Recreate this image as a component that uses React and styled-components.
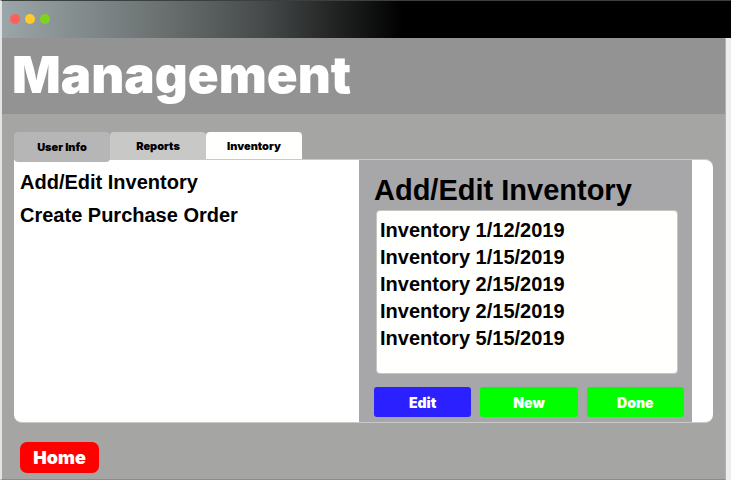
import React, { useState } from "react";
import styled, { createGlobalStyle } from "styled-components";

const GlobalStyle = createGlobalStyle`
  *, *::before, *::after { box-sizing: border-box; }
  body { margin: 0; background: #ededed; }
  button { border: 0; padding: 0; margin: 0; font: inherit; color: inherit; cursor: pointer; }
  h1, h2, ul { margin: 0; padding: 0; }
`;

const Page = styled.div`
  display: flex;
  flex-direction: column;
  min-height: 100vh;
  font-family: Inter, "Liberation Sans", sans-serif;
  color: #000;
`;

const TitleBar = styled.div`
  display: flex;
  align-items: center;
  gap: 5px;
  height: 38px;
  padding: 0 0 1px 8px;
  border-top: 1px solid #3c3f3f;
  border-left: 2px solid #e4e4e4;
  background: linear-gradient(90deg, #9ba6a8 0, #6a7070 22%, #454949 36%, #000 55%);
`;

const Dot = styled.span`
  width: 10px;
  height: 10px;
  border-radius: 50%;
  background: ${(p) => p.$color};
`;

const AppWindow = styled.div`
  flex: 1;
  display: flex;
  flex-direction: column;
  margin-right: 5px;
  border-left: 2px solid #e4e4e4;
  border-right: 1px solid #b2b2b2;
  border-bottom: 1px solid #8c8c8a;
  background: #a5a5a3;
`;

const Header = styled.header`
  height: 76px;
  padding: 7px 10px 0;
  background: #939393;
`;

const Title = styled.h1`
  color: #fff;
  font-size: 51px;
  font-weight: 900;
  line-height: 60px;
`;

const Main = styled.main`
  padding: 18px 12px 0;
`;

const TabList = styled.div`
  display: flex;
`;

const Tab = styled.button`
  position: relative;
  width: 96px;
  height: ${(p) => (p.$raised ? 30 : 27)}px;
  margin-bottom: ${(p) => (p.$raised ? -3 : 0)}px;
  border-radius: ${(p) => (p.$raised ? "4px" : "4px 4px 0 0")};
  background: ${(p) => p.$color};
  font-size: 11px;
  font-weight: 900;
`;

const Content = styled.section`
  display: grid;
  grid-template-columns: 345fr 333fr;
  min-height: 264px;
  padding-right: 21px;
  border: solid #c9c9c9;
  border-width: 1px 0;
  border-radius: 0 8px 8px 8px;
  background: #fff;
`;

const Menu = styled.nav`
  display: flex;
  flex-direction: column;
  align-items: flex-start;
  padding: 6px;
`;

const MenuItem = styled.button`
  height: 33px;
  background: none;
  font-family: "Liberation Sans", Arial, sans-serif;
  font-size: 20px;
  font-weight: 700;
  line-height: 33px;
`;

const Editor = styled.div`
  display: flex;
  flex-direction: column;
  padding: 10px 8px 5px 15px;
  background: #a7a7aa;
`;

const EditorTitle = styled.h2`
  font-family: "Liberation Sans", Arial, sans-serif;
  font-size: 29px;
  font-weight: 700;
  line-height: 40px;
`;

const InventoryList = styled.ul`
  height: 164px;
  margin: 0 6px 0 2px;
  padding: 6px 3px;
  border: 1px solid #c4c4c4;
  border-radius: 4px;
  background: #fffffd;
  list-style: none;
  font-family: "Liberation Sans", Arial, sans-serif;
  font-size: 20px;
  font-weight: 700;
  line-height: 27px;
`;

const Actions = styled.div`
  display: grid;
  grid-template-columns: repeat(3, 1fr);
  gap: 9px;
  margin-top: 13px;
`;

const Action = styled.button`
  height: 30px;
  border-radius: 3px;
  background: ${(p) => p.$color};
  color: #fff;
  font-size: 14px;
  font-weight: 900;
`;

const Footer = styled.footer`
  padding: 19px 18px 6px;
`;

const HomeButton = styled.button`
  width: 79px;
  height: 31px;
  border-radius: 7px;
  background: #f00;
  color: #fff;
  font-size: 18px;
  font-weight: 900;
`;

const tabs = [
  { name: "User Info", color: "#b6b6b6" },
  { name: "Reports", color: "#c8c8c6" },
  { name: "Inventory", color: "#fffffd" },
];

const inventories = ["1/12/2019", "1/15/2019", "2/15/2019", "2/15/2019", "5/15/2019"];

export default function App() {
  const [active, setActive] = useState("Inventory");
  return (
    <Page>
      <GlobalStyle />
      <TitleBar>
        <Dot $color="#ff5f5c" />
        <Dot $color="#ffca2c" />
        <Dot $color="#7ed321" />
      </TitleBar>
      <AppWindow>
        <Header>
          <Title>Management</Title>
        </Header>
        <Main>
          <TabList role="tablist">
            {tabs.map((tab, i) => (
              <Tab
                key={tab.name}
                role="tab"
                aria-selected={active === tab.name}
                onClick={() => setActive(tab.name)}
                $raised={i === 0}
                $color={tab.color}
              >
                {tab.name}
              </Tab>
            ))}
          </TabList>
          <Content>
            <Menu>
              <MenuItem>Add/Edit Inventory</MenuItem>
              <MenuItem>Create Purchase Order</MenuItem>
            </Menu>
            <Editor>
              <EditorTitle>Add/Edit Inventory</EditorTitle>
              <InventoryList>
                {inventories.map((date, i) => (
                  <li key={i}>Inventory {date}</li>
                ))}
              </InventoryList>
              <Actions>
                <Action $color="#2b20ff">Edit</Action>
                <Action $color="#0f0">New</Action>
                <Action $color="#0f0">Done</Action>
              </Actions>
            </Editor>
          </Content>
        </Main>
        <Footer>
          <HomeButton>Home</HomeButton>
        </Footer>
      </AppWindow>
    </Page>
  );
}
